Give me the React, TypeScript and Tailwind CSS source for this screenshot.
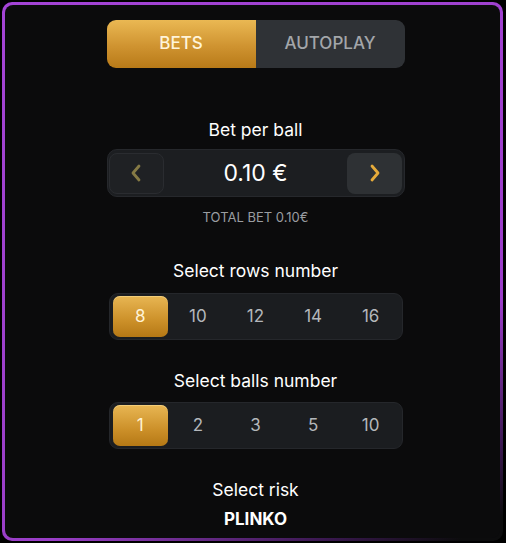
import { useState } from "react";

const rows = [8, 10, 12, 14, 16];
const balls = [1, 2, 3, 5, 10];

function Segment({ items, active, onPick }: { items: number[]; active: number; onPick: (n: number) => void }) {
    return (
        <div className="grid grid-cols-5 h-[47px] w-[294px] mx-auto rounded-[9px] bg-[#1b1d20] border border-[#25272b] p-[2px]">
            {items.map(n => (
                <button
                    key={n}
                    onClick={() => onPick(n)}
                    className={
                        n === active
                            ? "mx-[1px] pt-[1px] rounded-[7px] bg-[linear-gradient(180deg,#e8b653_0%,#cc9029_60%,#b57815_100%)] text-[#fff3d6] text-[17px] shadow-[inset_0_1px_0_rgba(255,230,160,0.5)]"
                            : "pt-[1px] text-[#b4b7bb] text-[17px]"
                    }
                >
                    {n}
                </button>
            ))}
        </div>
    );
}

export default function App() {
    const [rowCount, setRowCount] = useState(8);
    const [ballCount, setBallCount] = useState(1);

    return (
        <div className="w-[506px] h-[543px] bg-black p-[2px] font-['Inter',sans-serif]">
            <div className="h-[539px] w-[501px] rounded-[10px] p-[3px] bg-[linear-gradient(152deg,#a444d6_0%,#9a3ec8_70%,#3a1850_88%,#0c0c0d_97%)]">
                <div className="h-full rounded-[8px] bg-[#0b0b0c] flex flex-col items-center pl-[6px]">
                    {/* tabs */}
                    <div className="mt-[15px] flex w-[298px] h-[48px] rounded-[9px] overflow-hidden">
                        <button className="flex-1 bg-[linear-gradient(180deg,#eab853_0%,#cf9330_55%,#b87a18_100%)] text-[#fff4da] text-[17px] font-medium">
                            BETS
                        </button>
                        <button className="flex-1 bg-[#2f3236] text-[#a3a6aa] text-[17px] font-medium">
                            AUTOPLAY
                        </button>
                    </div>

                    <p className="mt-[50px] text-white text-[17.5px] leading-[24px]">Bet per ball</p>

                    <div className="mt-[7px] flex items-center justify-between w-[298px] h-[48px] rounded-[10px] bg-[#1c1e21] border border-[#26282c] px-[1px]">
                        <button className="w-[55px] h-[41px] rounded-[8px] bg-[#1f2124] border border-[#2a2c30] flex items-center justify-center">
                            <svg width="12" height="18" viewBox="0 0 12 18" fill="none">
                                <path d="M9 2 L3 9 L9 16" stroke="#857a45" strokeWidth="2.8" strokeLinecap="round" strokeLinejoin="round" />
                            </svg>
                        </button>
                        <span className="text-white text-[23px]">0.10 €</span>
                        <button className="w-[55px] h-[41px] rounded-[8px] bg-[#2e3134] flex items-center justify-center">
                            <svg width="12" height="18" viewBox="0 0 12 18" fill="none">
                                <path d="M3 2 L9 9 L3 16" stroke="#e6ab3a" strokeWidth="2.8" strokeLinecap="round" strokeLinejoin="round" />
                            </svg>
                        </button>
                    </div>

                    <p className="mt-[11px] text-[#9a9da1] text-[13px] leading-[18px]">TOTAL BET 0.10€</p>

                    <p className="mt-[33px] text-white text-[17.5px] leading-[24px]">Select rows number</p>
                    <div className="mt-[10px]">
                        <Segment items={rows} active={rowCount} onPick={setRowCount} />
                    </div>

                    <p className="mt-[29px] text-white text-[17.5px] leading-[24px]">Select balls number</p>
                    <div className="mt-[9px]">
                        <Segment items={balls} active={ballCount} onPick={setBallCount} />
                    </div>

                    <p className="mt-[29px] text-white text-[17.5px] leading-[24px]">Select risk</p>
                    <p className="mt-[5px] text-white text-[17px] font-bold leading-[24px]">PLINKO</p>
                </div>
            </div>
        </div>
    );
}
